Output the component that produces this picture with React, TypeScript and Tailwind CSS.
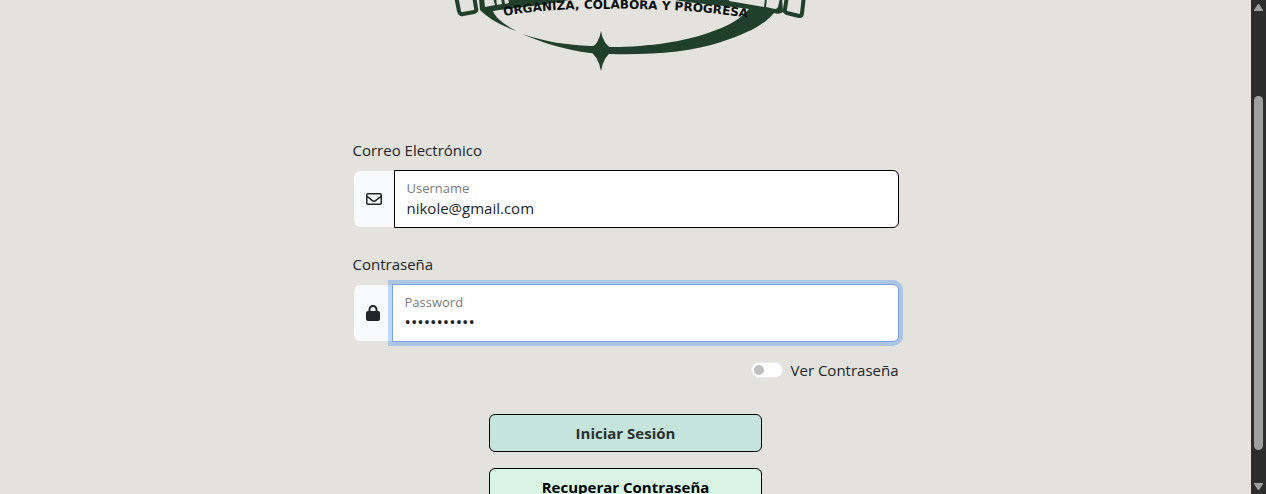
import { useState } from "react";
import type { ReactNode } from "react";

function Logo() {
  return (
    <svg viewBox="445 0 360 80" role="img" aria-label="Organiza, colabora y progresa" className="h-20 w-[360px]">
      <defs>
        <path id="tagline" d="M503 16 C545 8 600 8 640 9 C675 10 715 12 760 20" />
      </defs>
      <g fill="#20402b">
        <path d="M478 -2 H576 C550 5 518 7 492 11 C494 17 503 25 516 31 C500 26 487 18 479 10 Z" />
        <path d="M521 34 C545 42 566 45 590 46 L610 47 C650 47 684 41 707 33 C728 26 739 19 748 9 C720 5 690 4 664 -2 L781 -2 L782 12 Q778 15 773 13 C764 24 748 33 720 42 C691 52 650 55 610 54 L589 53 C565 50 542 43 521 34 Z" />
        <path d="M600 31 Q602 45 613 50 Q603 55 600 71 Q597 55 587 50 Q598 45 600 31 Z" />
      </g>
      <g fill="#e3e2dd">
        <path d="M483 -2 L484 7 L494 5 L492 -2 Z" />
        <path d="M495 -2 L496 5 L501 4 L500 -2 Z" />
        <path d="M503 -2 L504 4 L508 3 L507 -2 Z" />
        <path d="M729 -2 L728 1 L763 7 L764 -2 Z" />
        <path d="M766 -2 L765 7 L774 9 Q776 9 777 7 L779 -2 Z" />
      </g>
      <g fill="#e3e2dd" stroke="#20402b" strokeWidth="4" strokeLinejoin="round">
        <path d="M455 -4 L458 11 Q459 15 462 14 L473 12 Q476 11 475 8 L473 -4" />
        <path d="M786 -4 L784 9 Q783 12 786 13 L798 16 Q801 16 801 13 L803 -4" />
      </g>
      <text fill="#0b0f0c" className="text-[12px] font-bold" fontFamily="'DejaVu Sans', sans-serif">
        <textPath href="#tagline">ORGANIZA, COLABORA Y PROGRESA</textPath>
      </text>
    </svg>
  );
}

function MailIcon() {
  return (
    <svg viewBox="0 0 512 512" fill="currentColor" className="size-4" aria-hidden="true">
      <path d="M64 112c-8.800 0-16 7.200-16 16v22.100L220.500 291.700c20.700 17 50.400 17 71.100 0L464 150.100V128c0-8.800-7.200-16-16-16H64zM48 212.200V384c0 8.800 7.200 16 16 16H448c8.800 0 16-7.200 16-16V212.200L322 328.800c-38.400 31.500-93.700 31.500-132 0L48 212.200zM0 128C0 92.700 28.700 64 64 64H448c35.300 0 64 28.700 64 64V384c0 35.300-28.700 64-64 64H64c-35.300 0-64-28.700-64-64V128z" />
    </svg>
  );
}

function LockIcon() {
  return (
    <svg viewBox="0 0 448 512" fill="currentColor" className="h-4 w-[14px]" aria-hidden="true">
      <path d="M144 144v48H304V144c0-44.200-35.800-80-80-80s-80 35.800-80 80zM80 192V144C80 64.500 144.500 0 224 0s144 64.500 144 144v48h16c35.300 0 64 28.700 64 64V448c0 35.300-28.700 64-64 64H64c-35.300 0-64-28.700-64-64V256c0-35.300 28.700-64 64-64H80z" />
    </svg>
  );
}

type FieldProps = {
  id: string;
  title: string;
  caption: string;
  type: string;
  value: string;
  onChange: (value: string) => void;
  icon: ReactNode;
  addonClass: string;
  boxClass: string;
};

function Field({ id, title, caption, type, value, onChange, icon, addonClass, boxClass }: FieldProps) {
  return (
    <div>
      <label htmlFor={id} className="block leading-6">{title}</label>
      <div className="mt-2 flex h-[58px]">
        <span className={`my-px ml-px flex shrink-0 items-center justify-center rounded-l-md bg-[#f8f9fa] ${addonClass}`}>{icon}</span>
        <div className={`flex min-w-0 flex-1 flex-col rounded-r-md border bg-white px-3 pt-[7px] ${boxClass}`}>
          <label htmlFor={id} className="text-[13px] leading-5 text-[#797c80]">{caption}</label>
          <input
            id={id}
            type={type}
            value={value}
            onChange={(e) => onChange(e.target.value)}
            className={`h-5 w-full bg-transparent leading-5 outline-none ${type === "password" ? "text-[17px]" : ""}`}
          />
        </div>
      </div>
    </div>
  );
}

export default function App() {
  const [email, setEmail] = useState("nikole@gmail.com");
  const [password, setPassword] = useState("contrasena1");
  const [visible, setVisible] = useState(false);

  return (
    <div className="flex h-screen overflow-hidden bg-[#e3e2dd] font-['Open_Sans','Noto_Sans',sans-serif] text-[15px] text-[#212529]">
      <main className="flex min-w-0 flex-1 flex-col items-center">
        <div className="w-[360px] shrink-0">
          <Logo />
        </div>
        <form className="mt-[58px] w-full max-w-[546px] shrink-0" onSubmit={(e) => e.preventDefault()}>
          <Field id="email" title="Correo Electrónico" caption="Username" type="email" value={email} onChange={setEmail} icon={<MailIcon />} addonClass="w-10" boxClass="border-black" />
          <div className="mt-6">
            <Field id="password" title="Contraseña" caption="Password" type={visible ? "text" : "password"} value={password} onChange={setPassword} icon={<LockIcon />} addonClass="w-[38px]" boxClass="border-[#76a1e5] ring-4 ring-[#0d6efd]/25" />
          </div>
          <label className="mt-4 flex items-center justify-end gap-2 leading-6">
            <input
              type="checkbox"
              role="switch"
              checked={visible}
              onChange={(e) => setVisible(e.target.checked)}
              className="flex h-4 w-8 appearance-none items-center rounded-full border border-[#e9ecef] bg-white px-0.5 before:size-2.5 before:rounded-full before:bg-[#bfbfbf] checked:justify-end"
            />
            Ver Contraseña
          </label>
          <div className="mx-auto mt-8 flex w-1/2 flex-col gap-4 font-bold">
            <button type="submit" className="h-[38px] rounded-md border border-black bg-[#c5e5dc] text-[#2b2f2e]">Iniciar Sesión</button>
            <button type="button" className="h-[38px] rounded-md border border-black bg-[#d9f4e2] text-black">Recuperar Contraseña</button>
          </div>
        </form>
      </main>
      <div className="flex w-[15px] shrink-0 flex-col items-center bg-[#2c2c2c] py-1" aria-hidden="true">
        <svg viewBox="0 0 9 8" className="h-2 w-[9px]" fill="#9f9f9f"><path d="M4 0h1l4 6v1H0V6Z" /></svg>
        <div className="mt-[84px] h-[354px] w-[9px] rounded-full bg-[#9f9f9f]" />
        <svg viewBox="0 0 9 8" className="mt-auto h-2 w-[9px]" fill="#9f9f9f"><path d="M0 1h9v1L5 8H4L0 2Z" /></svg>
      </div>
    </div>
  );
}
